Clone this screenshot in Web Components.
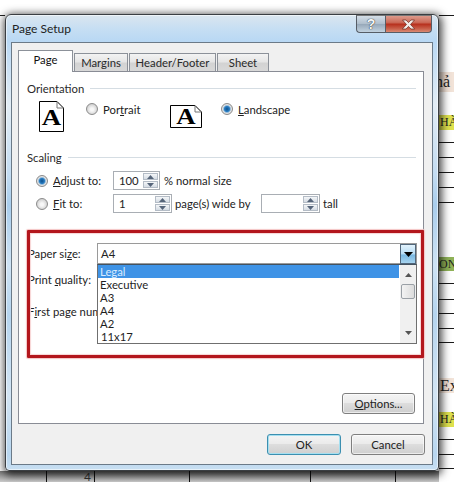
<!DOCTYPE html>
<html><head><meta charset="utf-8"><style>
html,body{margin:0;padding:0;background:#fff;overflow:hidden}
</style></head><body>
<x-app>
  <x-corner slot="corner"></x-corner>
  <x-dialog slot="dialog">
    <x-titlebar slot="title">Page Setup</x-titlebar>
    <x-tabs slot="tabs">
      <x-tab active w="55">Page</x-tab><x-tab w="54">Margins</x-tab><x-tab w="87">Header/Footer</x-tab><x-tab w="52">Sheet</x-tab>
    </x-tabs>
    <x-panel slot="panel">
      <x-group h="69" label="Orientation">
        <x-orient></x-orient>
      </x-group>
      <x-group h="62" label="Scaling">
        <x-scaling></x-scaling>
      </x-group>
      <x-paper></x-paper>
      <x-btn slot="options" w="73"><u>O</u>ptions...</x-btn>
    </x-panel>
    <x-footer slot="footer">
      <x-btn w="74" default>OK</x-btn><x-btn w="74">Cancel</x-btn>
    </x-footer>
  </x-dialog>
  <x-strip slot="strip"></x-strip>
  <x-under slot="under"></x-under>
</x-app>
<script>
const FONT = 'Lato,"Open Sans",sans-serif';
function def(name, css, html, init){
  customElements.define(name, class extends HTMLElement{
    constructor(){super();const r=this.attachShadow({mode:'open'});r.innerHTML='<style>'+css+'</style>'+html;}
    connectedCallback(){ if(init) init(this, this.shadowRoot); }
  });
}
def('x-app',`:host{display:grid;grid-template-columns:5px 434px 15px;grid-template-rows:14px 457px 11px;width:454px;height:482px;overflow:hidden;position:relative;background:#fff;font:11.3px ${FONT};color:#222}
 ::slotted([slot=corner]){grid-column:1;grid-row:1}
 ::slotted([slot=dialog]){grid-column:2;grid-row:2;z-index:2}
 ::slotted([slot=strip]){grid-column:3;grid-row:1/4}
 ::slotted([slot=under]){grid-column:1/3;grid-row:3}`,
 `<slot name="corner"></slot><slot name="dialog"></slot><slot name="strip"></slot><slot name="under"></slot>`);
def('x-corner',`:host{display:block;border-bottom:1px solid #222;height:14px;margin-top:1px}`,``);
def('x-dialog',`:host{display:flex;flex-direction:column;box-sizing:border-box;width:434px;height:457px;border:1px solid #3a3e42;border-radius:6px 6px 4px 4px;
   box-shadow:1px 2px 9px 2px rgba(0,0,0,.72),inset 0 0 0 1px rgba(255,255,255,.55);
   background:linear-gradient(180deg,#dbe6ef 0,#c6def3 14px,#b9d8f4 26px,#e3edf5 90px,#c3dcf2 160px,#a9cdec 190px,#cfe3f4 250px,#b5d4ee 300px,#d3e5f4 380px,#b8d6ef 440px,#c8dff2 100%)}
 .inner{box-sizing:border-box;margin:0 5px 5px 5px;flex:1;border:1px solid #6b7a88;background:#f0f0f0;padding:7px 0 0 6px;display:flex;flex-direction:column}`,
 `<slot name="title"></slot><div class="inner"><slot name="tabs"></slot><slot name="panel"></slot><slot name="footer"></slot></div>`);
def('x-titlebar',`:host{display:flex;height:27px;flex:none;padding-left:6px;color:#222;font-size:12px;box-sizing:border-box}
 .t{flex:1;padding-top:6px;line-height:15px}
 .btns{display:flex;height:18px;margin-right:6px}
 .b{box-sizing:border-box;height:18px;border:1px solid #565d66;border-top-color:#777;display:flex;align-items:center;justify-content:center}
 .q{width:29px;border-radius:0 0 0 4px;background:linear-gradient(180deg,#d4dee7,#aebdcb 50%,#97a9ba 52%,#c2d2df);color:#f4f6f8;font:bold 14px "Liberation Sans",sans-serif;text-shadow:0 0 1px #333,0 0 1px #333;border-right:none}
 .x{width:47px;border-radius:0 0 4px 0;background:linear-gradient(180deg,#dd9a8c,#cb6a58 40%,#b8321f 52%,#c9614b 80%,#d98a74)}`,
 `<div class="t"><slot></slot></div><div class="btns"><div class="b q">?</div><div class="b x"><svg width="15" height="11" viewBox="0 0 15 11"><path d="M1.5 1H5L7.5 3.6 10 1h3.5L9.5 5.5l4.2 4.500H10L7.500 7.400 5 10H1.300l4.200-4.500z" fill="#f3eeea" stroke="#6a2a20" stroke-width=".7"/></svg></div></div>`);
def('x-tabs',`:host{display:flex;height:21px;flex:none;align-items:flex-end;position:relative;z-index:1}`,`<slot></slot>`);
def('x-tab',`:host{display:flex;align-items:center;justify-content:center;box-sizing:border-box;height:18px;margin-right:1px;border:1px solid #8c9199;border-bottom:none;background:linear-gradient(180deg,#f3f3f3,#e6e6e6 45%,#d3d3d3 55%,#d8d8d8);color:#2a2a2a;padding-bottom:1px}
 :host([active]){height:22px;margin-bottom:-1px;background:#fff;color:#111;padding-bottom:4px}`,`<slot></slot>`,
 (el)=>{el.style.width=el.getAttribute('w')+'px'});
def('x-panel',`:host{display:flex;flex-direction:column;box-sizing:border-box;width:406px;height:353px;flex:none;background:#fff;border:1px solid #898c95;padding:10px 0 9px 8px;position:relative}
 .opt{margin-top:auto;display:flex;justify-content:flex-end;padding-right:8px}
 .red{position:absolute;left:8px;top:158px;width:397px;height:128px;box-sizing:border-box;border:3px solid #b3161c;box-shadow:0 0 1px 1px #f4c4c4,inset 0 0 1px 1px #f8d4d4;pointer-events:none;border-radius:1px}`,
 `<slot></slot><div class="opt"><slot name="options"></slot></div><div class="red"></div>`);
def('x-group',`:host{display:block;box-sizing:border-box}
 .h{display:flex;align-items:center;height:12px;padding-right:7px;gap:6px;color:#2a2a2a}
 .l{flex:1;height:1px;background:#d5dde3}`,
 `<div class="h"><span id="lb"></span><div class="l"></div></div><slot></slot>`,
 (el,r)=>{r.getElementById('lb').textContent=el.getAttribute('label');el.style.height=el.getAttribute('h')+'px'});
def('x-radio',`:host{display:flex;align-items:center;gap:5px;height:14px;flex:none}
 .r{box-sizing:border-box;width:12px;height:12px;border-radius:50%;border:1px solid #8b8b8b;background:radial-gradient(circle at 50% 55%,#f8f8f8 20%,#cfcfcf 75%,#bdbdbd);flex:none}
 :host([on]) .r{background:radial-gradient(circle,#0b4f8c 0,#2b7fc4 38%,#8fb8d8 48%,#e6e6e6 62%,#bbb 100%)}
 u{text-decoration-thickness:1px}`,
 `<div class="r"></div><span><slot></slot></span>`,
 (el)=>{if(el.getAttribute('w'))el.style.width=el.getAttribute('w')+'px'});
def('x-doc',`:host{display:block;box-sizing:border-box;flex:none;position:relative}
 svg{display:block}
 .a{position:absolute;left:0;right:0;text-align:center;font:bold var(--fs,26px)/1 "Liberation Serif",serif;color:#000;transform:scaleX(1.12)}`,
 `<svg id="s"></svg><div class="a">A</div>`,
 (el,r)=>{const w=+el.getAttribute('w'),h=+el.getAttribute('h'),s=r.getElementById('s');
  s.setAttribute('width',w);s.setAttribute('height',h);s.setAttribute('viewBox',`0 0 ${w} ${h}`);
  s.innerHTML=`<path d="M.5 .5H${w-7}L${w-.5} 7V${h-.5}H.5z" fill="#fff" stroke="#000"/><path d="M${w-7} .5V7H${w-.5}" fill="none" stroke="#777"/>`;
  const a=r.querySelector('.a');a.style.top=el.getAttribute('t')+'px';a.style.setProperty('--fs',el.getAttribute('fs')+'px');el.style.width=w+'px';el.style.height=h+'px';});
def('x-orient',`:host{display:flex;align-items:flex-start;padding:7px 0 0 12px}
 x-radio{margin-top:1px}`,
 `<x-doc w="25" h="31" t="4" fs="24"></x-doc><x-radio w="84" style="margin-left:22px">Por<u>t</u>rait</x-radio><x-doc w="32" h="23" t="-1" fs="24" style="margin-top:4px"></x-doc><x-radio on style="margin-left:19px"><u>L</u>andscape</x-radio>`);
def('x-spin',`:host{display:flex;box-sizing:border-box;height:19px;border:1px solid #a9aeb4;background:#fff;flex:none;padding:1px}
 .v{flex:1;padding-left:4px;line-height:15px}
 .s{width:15px;display:flex;flex-direction:column;gap:1px}
 .s div{flex:1;box-sizing:border-box;border:1px solid #b4bcc6;background:linear-gradient(180deg,#f4f6f8,#d5dce4);display:flex;align-items:center;justify-content:center}
 .s svg{display:block}`,
 `<div class="v"><slot></slot></div><div class="s"><div><svg width="7" height="4"><path d="M3.500 0L7 4H0z" fill="#56657a"/></svg></div><div><svg width="7" height="4"><path d="M0 0H7L3.500 4z" fill="#56657a"/></svg></div></div>`,
 (el)=>{el.style.width=el.getAttribute('w')+'px'});
def('x-scaling',`:host{display:flex;flex-direction:column;gap:4px;padding:8px 0 0 9px}
 .row{display:flex;align-items:center;height:19px}`,
 `<div class="row"><x-radio on w="77"><u>A</u>djust to:</x-radio><x-spin w="47">100</x-spin><span style="margin-left:4px">% normal size</span></div>
  <div class="row"><x-radio w="77"><u>F</u>it to:</x-radio><x-spin w="59">1</x-spin><span style="margin-left:3px;width:86px">page(s) wide by</span><x-spin w="59"></x-spin><span style="margin-left:3px">tall</span></div>`);
def('x-combo',`:host{display:block;box-sizing:border-box;width:320px;height:21px;border:1px solid #9a9a9a;background:#fff;position:relative}
 .v{padding-left:3px;line-height:19px;height:20px}
 .btn{position:absolute;right:0;top:0;width:16px;height:20px;box-sizing:border-box;border:1px solid #51667a;background:linear-gradient(180deg,#e2f2fc,#b8dcf3 50%,#79b7e0 55%,#a6d3ef);display:flex;align-items:center;justify-content:center}
 .list{position:absolute;left:-1px;top:20px;width:320px;box-sizing:border-box;height:80px;background:#fff;border:1px solid #6f6f6f;border-top-color:#44525f;display:flex;z-index:3}
 .items{flex:1;line-height:13px;min-width:0}
 .it{height:13px;padding-left:2px;color:#1e1e1e;white-space:nowrap}
 .it.sel{background:#3f93e6;color:#d9ecff}
 .sb{width:16px;margin-left:1px;background:#f0f0f0;display:flex;flex-direction:column;align-items:center;position:relative}
 .thumb{width:14px;height:15px;box-sizing:border-box;border:1px solid #9aa0a6;border-radius:2px;background:linear-gradient(90deg,#f3f3f3,#dcdcdc);margin-top:7px}
 .sb svg{display:block}`,
 `<div class="v">A4</div><div class="btn"><svg width="9" height="5"><path d="M0 0H9L4.500 5z" fill="#000"/></svg></div>
  <div class="list"><div class="items"><div class="it sel">Legal</div><div class="it">Executive</div><div class="it">A3</div><div class="it">A4</div><div class="it">A2</div><div class="it" style="padding-left:3px">11x17</div></div>
  <div class="sb"><svg width="7" height="4" style="margin-top:8px"><path d="M3.500 0L7 4H0z" fill="#555"/></svg><div class="thumb"></div><svg width="7" height="4" style="margin-top:32px"><path d="M0 0H7L3.500 4z" fill="#555"/></svg></div></div>`);
def('x-paper',`:host{display:grid;grid-template-columns:69px 320px;grid-template-rows:21px 30px 34px;margin-top:30px;color:#222;padding-left:1px}
 .lb{white-space:nowrap;align-self:center;min-width:0}
 .r2{grid-row:2;grid-column:1}
 .r3{grid-row:3;grid-column:1;overflow:hidden}`,
 `<div class="lb">Paper si<u>z</u>e:</div><x-combo></x-combo><div class="lb r2">Print <u>q</u>uality:</div><div class="lb r3">F<u>i</u>rst page number:</div>`);
def('x-btn',`:host{display:flex;align-items:center;justify-content:center;box-sizing:border-box;height:21px;border:1px solid #7f7f7f;border-radius:3px;background:linear-gradient(180deg,#f4f4f4,#ebebeb 45%,#dddddd 50%,#cfcfcf);color:#222;flex:none;box-shadow:inset 0 0 0 1px rgba(255,255,255,.6)}
 :host([default]){border-color:#3c8fb0;box-shadow:inset 0 0 0 1px #a5dff0}
 span{white-space:pre}`,`<span><slot></slot></span>`,
 (el)=>{el.style.width=el.getAttribute('w')+'px'});
def('x-footer',`:host{display:flex;gap:10px;justify-content:flex-end;padding:10px 0 0 0;width:407px;box-sizing:border-box}`,`<slot></slot>`);
def('x-strip',`:host{display:flex;flex-direction:column;width:15px;height:482px;overflow:hidden;background:#fff;font-family:"Liberation Serif",serif;color:#222}
 div{flex:none;white-space:nowrap;overflow:hidden;box-sizing:border-box}
 .ln{height:1px;background:#1a1a1a}
 .p{background:#f2e3d8;font-size:16px}
 .y{background:#dfe24e;font-size:12px;line-height:15px;font-weight:normal}
 .g{background:#8fb257;font-size:12px;line-height:14px}`,``,
 (el,r)=>{
  if(r.querySelector('.ln'))return;
  const segs=[[15],'l',[56],[20,'p','nả',-4],[23],[15,'y','HÀ',1],[12],'l',[14],'l',[14],'l',[14],'l',[14],'l',[54],[14,'g','ON',0],[12],'l',[15],'l',[13],'l',[14],'l',[13],'l',[35],[15,'p','Ex',1],[19],[15,'y','HÀ',1],[12],'l',[14],'l',[13],'l',[13]];
  for(const s of segs){const d=document.createElement('div');
   if(s==='l'){d.className='ln';}
   else{d.style.height=s[0]+'px';if(s[1]){d.className=s[1];d.textContent=s[2];d.style.textIndent=s[3]+'px';d.style.lineHeight=s[0]+'px';}}
   r.appendChild(d);}
 });
def('x-under',`:host{display:flex;height:11px;overflow:hidden;background:linear-gradient(180deg,#777,#ccc)}
 div{box-sizing:border-box;height:11px;border-right:1px solid #111;text-align:right;font:12px/12px Lato,sans-serif;color:#333;padding-right:3px}`,
 `<div style="width:47px"></div><div style="width:48px">4</div><div style="width:95px"></div><div style="width:121px"></div><div style="width:85px"></div>`);
</script>
</body></html>
